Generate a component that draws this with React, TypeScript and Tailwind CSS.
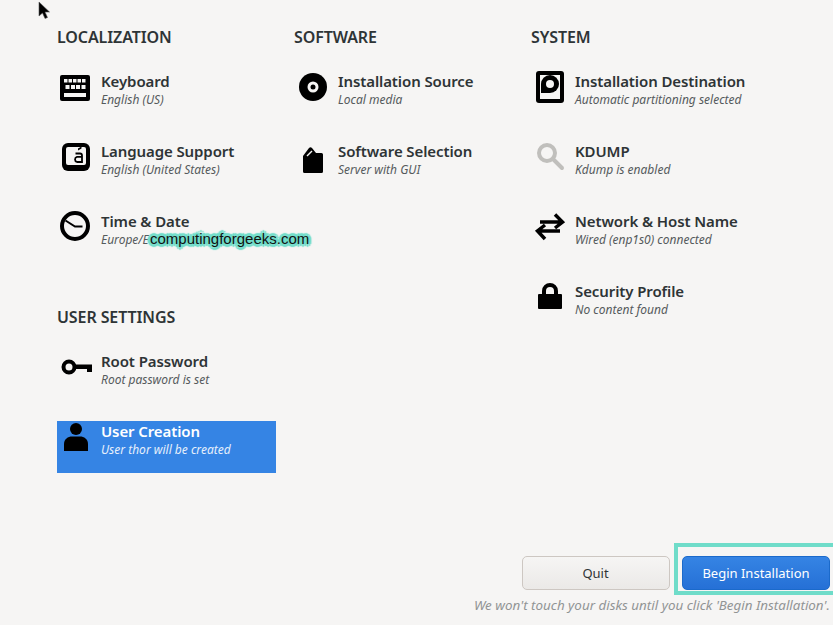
const TitleCls = "text-[15px] leading-[20px] font-semibold whitespace-nowrap tracking-[-0.1px]";
const L = "#f6f5f4";

const Ico = ({ children }: { children: React.ReactNode }) => (
  <svg width="36" height="36" viewBox="0 0 36 36" className="block">{children}</svg>
);

const Keyboard = () => (
  <Ico>
    <rect x="1" y="4" width="30" height="26" rx="2" fill="#000" />
    <g fill={L}>
      <rect x="5" y="8" width="3.500" height="3.500"/><rect x="9.500" y="8" width="3.500" height="3.500"/><rect x="14" y="8" width="3.500" height="3.500"/><rect x="18.500" y="8" width="3.500" height="3.500"/><rect x="23" y="8" width="3.500" height="3.500"/>
      <rect x="6.500" y="14" width="4" height="4"/><rect x="12" y="14" width="4" height="4"/><rect x="17" y="14" width="4" height="4"/><rect x="22.500" y="14" width="4" height="4"/>
      <rect x="5" y="22" width="22" height="4"/>
    </g>
  </Ico>
);
const Lang = () => (
  <Ico>
    <rect x="3" y="2" width="28" height="28" rx="6" fill="#000"/>
    <path d="M9 6h16a2 2 0 0 1 2 2v14a2 2 0 0 1-2 2H9a2 2 0 0 1-2-2V8a2 2 0 0 1 2-2Z" fill={L}/>
    <path d="M19 7.500l3.500-2v2l-3.500 2Z" fill="#000"/>
    <path d="M16.500 12.500h4.500a2 2 0 0 1 2 2V21h-5a2.700 2.700 0 0 1 0-5.200h5" fill="none" stroke="#000" strokeWidth="1.800"/>
  </Ico>
);
const Clock = () => (
  <Ico>
    <circle cx="16" cy="15" r="13" fill="none" stroke="#000" strokeWidth="4"/>
    <path d="M6.500 9.500 16 15.500h7.500" fill="none" stroke="#000" strokeWidth="2"/>
  </Ico>
);
const Disc = () => (
  <Ico>
    <circle cx="17" cy="16" r="14" fill="#000"/>
    <circle cx="17" cy="16" r="5.500" fill={L}/>
    <circle cx="17" cy="16" r="2.500" fill="#000"/>
  </Ico>
);
const Box = () => (
  <Ico>
    <path d="M7 15 13 7Q14.500 5.500 16 7L20 12H25.500Q27 12 27 13.500V30.500Q27 32 25.500 32H8.500Q7 32 7 30.500Z" fill="#000"/>
    <path d="M11 15 16 10" stroke={L} strokeWidth="1.500"/>
  </Ico>
);
const Hdd = () => (
  <Ico>
    <rect x="3" y="0" width="28" height="32" rx="3" fill="#000"/>
    <rect x="7" y="4" width="20" height="24" fill={L}/>
    <path d="M8 22V13a9 9 0 1 1 9 9Z" fill="#000"/>
    <circle cx="17" cy="13" r="4" fill={L}/>
  </Ico>
);
const Search = () => (
  <Ico>
    <circle cx="14" cy="12" r="8" fill="none" stroke="#c0bfbc" strokeWidth="4"/>
    <path d="M20 18 29 27" stroke="#c0bfbc" strokeWidth="4" strokeLinecap="round"/>
  </Ico>
);
const Arrows = () => (
  <Ico>
    <path d="M7 11H29M22 3.500 29.500 11 22 17M27 20H5M12 14 4.500 20 12 28" fill="none" stroke="#000" strokeWidth="3.500"/>
  </Ico>
);
const Lock = () => (
  <Ico>
    <path d="M11 15V10a6 6 0 0 1 12 0v5" fill="none" stroke="#000" strokeWidth="4"/>
    <rect x="5" y="13" width="24" height="15" rx="1" fill="#000"/>
  </Ico>
);
const KeyIcon = () => (
  <Ico>
    <circle cx="10" cy="16" r="5.500" fill="none" stroke="#000" strokeWidth="4"/>
    <path d="M15 13.500H33V21H28V18H15Z" fill="#000"/>
  </Ico>
);
const UserIcon = () => (
  <Ico>
    <circle cx="17" cy="8" r="6" fill="#000"/>
    <path d="M5 30V23C5 18 9 15.500 13 15.500H21C25 15.500 29 18 29 23V30Z" fill="#000"/>
  </Ico>
);

function Spoke({ icon, title, sub, selected }: { icon: React.ReactNode; title: string; sub: string; selected?: boolean }) {
  return (
    <div className={`flex h-[52px] w-[219px] ${selected ? "bg-[#3584e4] text-white" : "text-[#2e3436]"}`}>
      <div className="w-[36px] ml-[2px] mr-[6px] shrink-0">{icon}</div>
      <div>
        <div className={TitleCls}>{title}</div>
        <div className={`mt-[1px] text-[12px] leading-[15px] italic whitespace-nowrap ${selected ? "text-[#e6effb]" : "text-[#555a5c]"}`}>{sub}</div>
      </div>
    </div>
  );
}

function Header({ children }: { children: React.ReactNode }) {
  return <div className="text-[16px] leading-[20px] font-semibold tracking-[-0.1px] text-[#2e3436] whitespace-nowrap">{children}</div>;
}

export default function App() {
  return (
    <div className="relative w-[833px] h-[625px] overflow-hidden bg-[#f6f5f4] font-['Noto_Sans',sans-serif]">
      <div className="flex pl-[57px] pt-[27px]">
        <div className="w-[237px]">
          <Header>LOCALIZATION</Header>
          <div className="flex flex-col gap-[18px] mt-[24px]">
            <Spoke icon={<Keyboard />} title="Keyboard" sub="English (US)" />
            <Spoke icon={<Lang />} title="Language Support" sub="English (United States)" />
            <Spoke icon={<Clock />} title="Time & Date" sub="Europe/E" />
          </div>
          <div className="mt-[44px]"><Header>USER SETTINGS</Header></div>
          <div className="flex flex-col gap-[18px] mt-[24px]">
            <Spoke icon={<KeyIcon />} title="Root Password" sub="Root password is set" />
            <Spoke icon={<UserIcon />} title="User Creation" sub="User thor will be created" selected />
          </div>
        </div>
        <div className="w-[237px]">
          <Header>SOFTWARE</Header>
          <div className="flex flex-col gap-[18px] mt-[24px]">
            <Spoke icon={<Disc />} title="Installation Source" sub="Local media" />
            <Spoke icon={<Box />} title="Software Selection" sub="Server with GUI" />
          </div>
        </div>
        <div className="w-[237px]">
          <Header>SYSTEM</Header>
          <div className="flex flex-col gap-[18px] mt-[24px]">
            <Spoke icon={<Hdd />} title="Installation Destination" sub="Automatic partitioning selected" />
            <Spoke icon={<Search />} title="KDUMP" sub="Kdump is enabled" />
            <Spoke icon={<Arrows />} title="Network & Host Name" sub="Wired (enp1s0) connected" />
            <Spoke icon={<Lock />} title="Security Profile" sub="No content found" />
          </div>
        </div>
      </div>

      <div className="absolute left-0 right-0 top-[556px] pr-[3px] flex flex-col items-end">
        <div className="flex gap-[12px]">
          <button className="w-[148px] h-[34px] pt-[1px] pr-[1px] rounded-[5px] border border-[#cdc7c2] bg-gradient-to-b from-[#f6f5f4] to-[#ebe9e7] text-[13px] text-[#2e3436]">Quit</button>
          <button className="w-[148px] h-[34px] pt-[1px] rounded-[5px] border border-[#1b6acb] bg-gradient-to-b from-[#3584e4] to-[#2570d6] text-[13px] text-white">Begin Installation</button>
        </div>
        <div className="mt-[6px] text-[13.4px] leading-[18px] italic text-[#919494] whitespace-nowrap">We won't touch your disks until you click 'Begin Installation'.</div>
      </div>

      {/* annotation overlays */}
      <div className="absolute left-[674px] top-[543px] w-[159px] h-[52px] border-[4px] border-r-0 border-[#6fdcc9]" />
      <div className="absolute left-[150px] top-[230px] font-['Liberation_Sans',sans-serif] text-[15px] leading-[17px] text-[#111] whitespace-nowrap [text-shadow:2px_0_1px_#6fdcc9,-2px_0_1px_#6fdcc9,0_2px_1px_#6fdcc9,0_-2px_1px_#6fdcc9,2px_2px_1px_#6fdcc9,-2px_-2px_1px_#6fdcc9,2px_-2px_1px_#6fdcc9,-2px_2px_1px_#6fdcc9,3px_0_1px_#6fdcc9,-3px_0_1px_#6fdcc9,0_3px_1px_#6fdcc9,0_-3px_1px_#6fdcc9]">computingforgeeks.com</div>
      <svg className="absolute left-[38px] top-[1px]" width="13" height="19" viewBox="0 0 13 19"><path d="M1 1v14l3.500-3 2.500 5.500 2.500-1-2.500-5.500h4.500Z" fill="#000" stroke="#555" strokeWidth=".6"/></svg>
    </div>
  );
}
